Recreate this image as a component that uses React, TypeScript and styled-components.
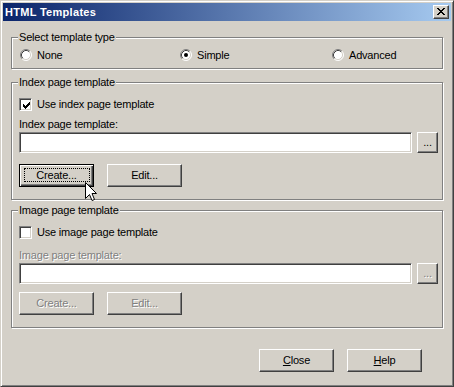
import styled, { createGlobalStyle } from "styled-components";

const GlobalStyle = createGlobalStyle`
  html, body {
    margin: 0;
    padding: 0;
    background: #d4d0c8;
  }
  body {
    font-family: "Liberation Sans", Arial, sans-serif;
    font-size: 11px;
    letter-spacing: -0.2px;
    color: #000;
  }
`;

const face = "#d4d0c8";

const Window = styled.div`
  position: relative;
  box-sizing: border-box;
  width: 454px;
  height: 387px;
  display: flex;
  flex-direction: column;
  padding: 2px;
  background: ${face};
  border: 1px solid;
  border-color: ${face} #404040 #404040 ${face};
  box-shadow: inset 1px 1px #fff, inset -1px -1px #808080;
`;

const TitleBar = styled.div`
  height: 18px;
  display: flex;
  align-items: center;
  justify-content: space-between;
  padding: 0 2px 0 2px;
  background: linear-gradient(to right, #0a246a, #a6caf0);
  color: #fff;
  font-weight: bold;
  font-size: 11px;
  letter-spacing: 0.3px;
`;

const TitleText = styled.span`
  line-height: 18px;
`;

const CloseBox = styled.div`
  box-sizing: border-box;
  width: 16px;
  height: 14px;
  display: flex;
  align-items: center;
  justify-content: center;
  background: ${face};
  border: 1px solid;
  border-color: #fff #404040 #404040 #fff;
  box-shadow: inset -1px -1px #808080;
  padding: 0 1px 1px 0;
`;

const Body = styled.div`
  flex: 1;
  display: flex;
  flex-direction: column;
  padding: 10px 8px 12px;
`;

const Group = styled.fieldset<{ $mt: number; $pb: number }>`
  margin: ${(p) => p.$mt}px 0 0;
  padding: 0 0 ${(p) => p.$pb}px 7px;
  min-width: 0;
  border: 1px solid #808080;
  box-shadow: inset 1px 1px #fff, 1px 1px #fff;
`;

const Legend = styled.legend`
  padding: 0 1px;
  margin-left: -1px;
  line-height: 13px;
  background: ${face};
`;

const RadioRow = styled.div`
  margin-top: 4px;
  height: 14px;
  padding-left: 1px;
  display: grid;
  grid-template-columns: 160px 152px 1fr;
  align-items: center;
`;

const Option = styled.label`
  display: flex;
  align-items: center;
  gap: 5px;
  line-height: 13px;
`;

const CheckRow = styled.label`
  margin-top: 8px;
  height: 15px;
  display: flex;
  align-items: center;
  gap: 5px;
  line-height: 13px;
`;

const CheckBox = styled.span`
  box-sizing: border-box;
  width: 13px;
  height: 13px;
  display: flex;
  align-items: center;
  justify-content: center;
  background: #fff;
  border: 1px solid;
  border-color: #808080 #fff #fff #808080;
  box-shadow: inset 1px 1px #404040, inset -1px -1px ${face};
  padding: 1px 0 0 1px;
`;

const FieldLabel = styled.div<{ $mt: number; $disabled?: boolean }>`
  margin-top: ${(p) => p.$mt}px;
  line-height: 13px;
  color: ${(p) => (p.$disabled ? "#808080" : "#000")};
  text-shadow: ${(p) => (p.$disabled ? "1px 1px #fff" : "none")};
`;

const InputRow = styled.div`
  margin-top: 1px;
  display: flex;
  gap: 5px;
`;

const TextBox = styled.div`
  box-sizing: border-box;
  flex: none;
  width: 393px;
  height: 21px;
  background: #fff;
  border: 1px solid;
  border-color: #808080 #fff #fff #808080;
  box-shadow: inset 1px 1px #404040, inset -1px -1px ${face};
`;

const Button = styled.button<{ $default?: boolean; $w?: number }>`
  position: relative;
  box-sizing: border-box;
  flex: none;
  width: ${(p) => p.$w ?? 75}px;
  height: ${(p) => (p.$w ? 21 : 23)}px;
  padding: 0;
  margin: 0;
  font: inherit;
  letter-spacing: inherit;
  line-height: 13px;
  color: #000;
  background: ${face};
  border: 1px solid;
  border-color: ${(p) => (p.$default ? "#000" : "#fff #404040 #404040 #fff")};
  box-shadow: ${(p) =>
    p.$default
      ? "inset 1px 1px #fff, inset -1px -1px #404040, inset -2px -2px #808080"
      : "inset -1px -1px #808080"};
  overflow: visible;

  &:disabled {
    color: #808080;
    text-shadow: 1px 1px #fff;
  }
`;

const FocusRect = styled.span`
  position: absolute;
  left: 4px;
  right: 3px;
  top: 3px;
  bottom: 4px;
  border: 1px dotted #000;
`;

const ButtonRow = styled.div<{ $mt: number }>`
  margin-top: ${(p) => p.$mt}px;
  display: flex;
  gap: 13px;
`;

const Footer = styled.div`
  margin-top: auto;
  display: flex;
  justify-content: flex-end;
  gap: 13px;
  padding-right: 21px;
`;

const Cursor = styled.svg`
  position: absolute;
  left: 65px;
  top: 17px;
  z-index: 2;
`;

const Radio = ({ checked }: { checked?: boolean }) => (
  <svg width="12" height="12" viewBox="0 0 12 12">
    <circle cx="6" cy="6" r="5" fill="#fff" />
    <path d="M2.11 9.89 A5.5 5.5 0 0 1 9.89 2.11" fill="none" stroke="#808080" />
    <path d="M9.89 2.11 A5.5 5.5 0 0 1 2.11 9.89" fill="none" stroke="#fff" />
    <path d="M2.82 9.18 A4.5 4.5 0 0 1 9.18 2.82" fill="none" stroke="#404040" />
    <path d="M9.18 2.82 A4.5 4.5 0 0 1 2.82 9.18" fill="none" stroke={face} />
    {checked && <circle cx="6" cy="6" r="2" fill="#000" />}
  </svg>
);

const Check = () => (
  <svg width="7" height="7" viewBox="0 0 7 7" shapeRendering="crispEdges">
    <path d="M6 0h1v1H6zM5 1h2v1H5zM0 2h1v1H0zM4 2h3v1H4zM0 3h2v1H0zM3 3h3v1H3zM0 4h5v1H0zM1 5h3v1H1zM2 6h1v1H2z" />
  </svg>
);

const CloseGlyph = () => (
  <svg width="8" height="7" viewBox="0 0 8 7" shapeRendering="crispEdges">
    <path d="M0 0h2v1H0zM6 0h2v1H6zM1 1h2v1H1zM5 1h2v1H5zM2 2h4v1H2zM3 3h2v1H3zM2 4h4v1H2zM1 5h2v1H1zM5 5h2v1H5zM0 6h2v1H0zM6 6h2v1H6z" />
  </svg>
);

export default function App() {
  return (
    <>
      <GlobalStyle />
      <Window>
        <TitleBar>
          <TitleText>HTML Templates</TitleText>
          <CloseBox>
            <CloseGlyph />
          </CloseBox>
        </TitleBar>
        <Body>
          <Group $mt={0} $pb={6}>
            <Legend>Select template type</Legend>
            <RadioRow>
              <Option>
                <Radio />
                None
              </Option>
              <Option>
                <Radio checked />
                Simple
              </Option>
              <Option>
                <Radio />
                Advanced
              </Option>
            </RadioRow>
          </Group>

          <Group $mt={7} $pb={12}>
            <Legend>Index page template</Legend>
            <CheckRow>
              <CheckBox>
                <Check />
              </CheckBox>
              Use index page template
            </CheckRow>
            <FieldLabel $mt={6}>Index page template:</FieldLabel>
            <InputRow>
              <TextBox />
              <Button $w={21}>...</Button>
            </InputRow>
            <ButtonRow $mt={11}>
              <Button $default>
                Create...
                <FocusRect />
                <Cursor width="13" height="20" viewBox="0 0 13 20">
                  <polygon
                    points="0.5,0.5 0.5,16.5 4.5,12.5 7,18.5 9.5,17.5 7,11.5 11.5,11.5"
                    fill="#fff"
                    stroke="#000"
                  />
                </Cursor>
              </Button>
              <Button>Edit...</Button>
            </ButtonRow>
          </Group>

          <Group $mt={4} $pb={12}>
            <Legend>Image page template</Legend>
            <CheckRow>
              <CheckBox />
              Use image page template
            </CheckRow>
            <FieldLabel $mt={9} $disabled>
              Image page template:
            </FieldLabel>
            <InputRow>
              <TextBox />
              <Button $w={21} disabled>
                ...
              </Button>
            </InputRow>
            <ButtonRow $mt={8}>
              <Button disabled>Create...</Button>
              <Button disabled>Edit...</Button>
            </ButtonRow>
          </Group>

          <Footer>
            <Button>
              <u>C</u>lose
            </Button>
            <Button>
              <u>H</u>elp
            </Button>
          </Footer>
        </Body>
      </Window>
    </>
  );
}
